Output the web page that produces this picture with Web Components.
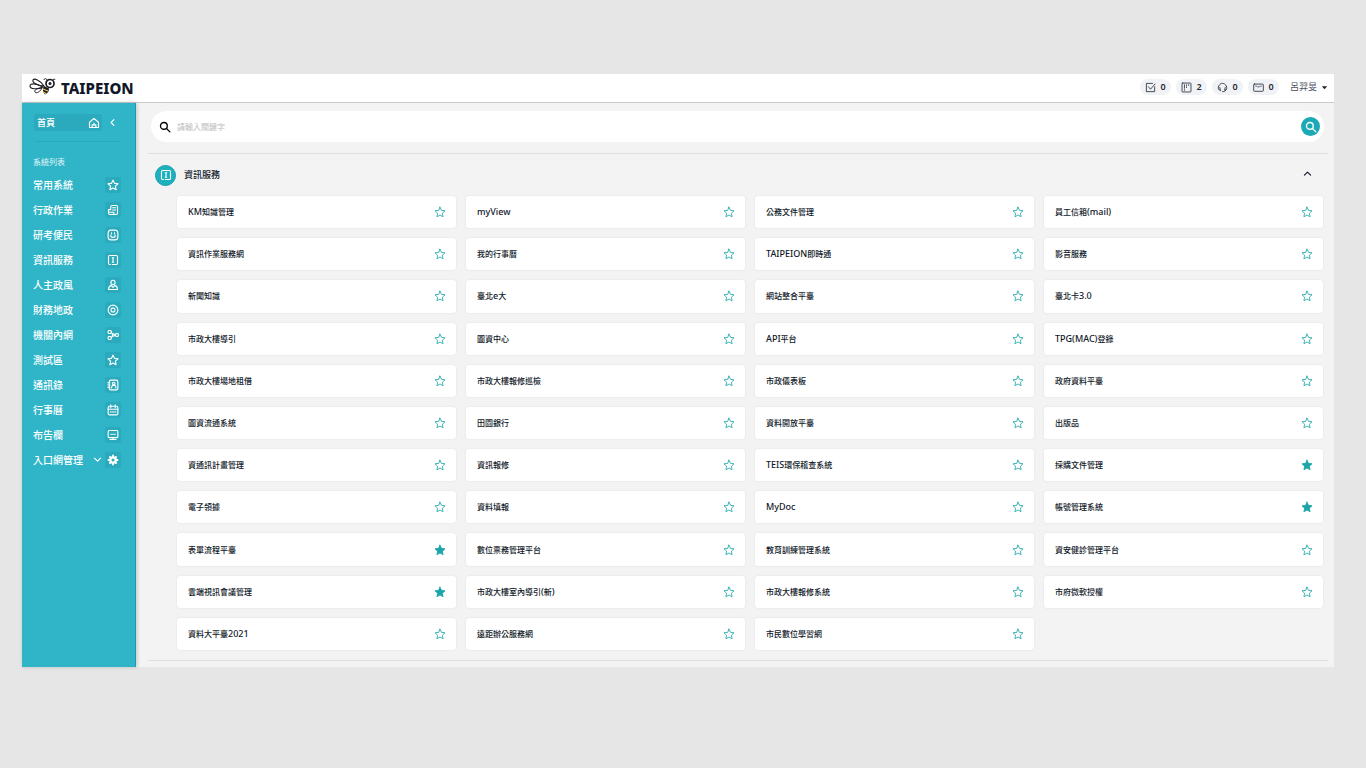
<!DOCTYPE html>
<html lang="zh-Hant">
<head>
<meta charset="utf-8">
<meta name="viewport" content="width=device-width, initial-scale=1">
<title>TAIPEION</title>
<style>
html, body { height: 100%; margin: 0; }
body {
  box-sizing: border-box; display: flex; flex-direction: column;
  padding: 74px 32px 101px 22px; background: #e6e6e6; color: #101828;
  font-family: "Noto Sans", "Noto Sans CJK TC", sans-serif;
}
</style>
</head>
<body>
<portal-app></portal-app>
<script>
const STAR = 'M8 1.5l2 4.3 4.700.600-3.500 3.200.900 4.700L8 12l-4.100 2.300.900-4.700L1.300 6.400 6 5.800z';
const ICONS = {
  star: `<path d="${STAR}"/>`,
  starFull: `<path d="${STAR}" fill="currentColor"/>`,
  home: '<path d="M2 7l6-5 6 5v7H2z"/><path d="M5.500 14v-3.500h5V14M8 8v2.500"/>',
  left: '<path d="M10.500 3L5.500 8l5 5"/>',
  down: '<path d="M2.500 5.500L8 11l5.500-5.500"/>',
  up: '<path d="M2.500 11L8 5.500 13.500 11"/>',
  doc: '<path d="M5 7V4a2 2 0 0 1 2-2h5.500A1.500 1.500 0 0 1 14 3.500V12a2 2 0 0 1-2 2H4a2 2 0 0 1-2-2v-1h7v1a2 2 0 0 0 2 2M7.500 5h4M7.500 8h4M2 11V7.500h3"/>',
  face: '<rect x="1.500" y="1.500" width="13" height="13" rx="4"/><path d="M5 8.500c0 3.500 6 3.500 6 0M6 5v1.500M10 5v1.500"/>',
  info: '<path d="M4.500 14h-1A1.500 1.500 0 0 1 2 12.500v-9A1.500 1.500 0 0 1 3.500 2h9A1.500 1.500 0 0 1 14 3.500v9a1.500 1.500 0 0 1-1.500 1.500H7M7 5h2M8 5v6M7 11h2"/>',
  person: '<circle cx="8" cy="4.500" r="2.800"/><path d="M5.500 8.500C3 9.500 2 11.500 2 14h12c0-2.500-1-4.500-3.500-5.500L8 11z"/>',
  coin: '<circle cx="8" cy="8" r="6.500"/><rect x="5.500" y="5.500" width="5" height="5" rx="1.500"/>',
  nodes: '<rect x="1.500" y="2" width="4" height="4" rx="1"/><rect x="1.500" y="10" width="4" height="4" rx="1"/><circle cx="8.500" cy="8" r="1.500"/><rect x="11.500" y="6" width="3.500" height="4" rx="1"/><path d="M5.500 4l2 3M5.500 12l2-3M10 8h1.500"/>',
  contact: '<rect x="3" y="1.500" width="11.500" height="13" rx="2"/><circle cx="9" cy="6" r="1.700"/><path d="M6 12c0-5 6-5 6 0M1 5h3M1 8h3M1 11h3"/>',
  calendar: '<rect x="1.500" y="3" width="13" height="11.500" rx="2"/><path d="M1.500 7h13M5 1v4M11 1v4M4.500 10.500h1M7.500 10.500h1M10.500 10.500h1"/>',
  board: '<rect x="1.500" y="2" width="13" height="9.500" rx="1.500"/><path d="M8 11.500V14M4 14h8M5 7h1M7.500 7h1M10 7h1"/>',
  gear: '<circle cx="8" cy="8" r="3.500" stroke-width="3"/><path d="M8 2v2M8 12v2M2 8h2M12 8h2M4 4l1 1M11 11l1 1M12 4l-1 1M4 12l1-1" stroke-width="2.600"/>',
  search: '<circle cx="6.500" cy="6.500" r="4.500"/><path d="M10 10l4.500 4.500"/>',
  check: '<path d="M14 7v7H2V2h9M5 7l3 3.500L14.500 3"/>',
  book: '<rect x="1.500" y="1.500" width="13" height="13" rx="1"/><path d="M5 4v5M5 11v1M8 4v1M8 7v1M11 4v1"/>',
  headset: '<path d="M5 12L3 11.500C0 9 3 2 8 2s8 7 5 9.500L11 12l1-4M5 12L4 8M13 11.500c-1 2-2 2.500-5 2.500"/>',
  mail: '<rect x="1" y="3" width="14" height="10.500" rx="1"/><path d="M4 6h1M7 7h2M11 6h1"/>',
  caret: '<path d="M2 5h12l-6 7z" fill="currentColor" stroke="none"/>'
};

function define(name, css, render) {
  customElements.define(name, class extends HTMLElement {
    connectedCallback() {
      if (this.shadowRoot) return;
      this.attachShadow({ mode: 'open' }).innerHTML =
        `<style>*{box-sizing:border-box}button{font:inherit;color:inherit;border:0;background:none;padding:0;cursor:pointer}a{color:inherit;text-decoration:none}${css}</style>${render(this)}`;
    }
  });
}

define('ui-icon',
  ':host{display:inline-flex;flex:none;width:12px;height:12px}svg{display:block;width:100%;height:100%}',
  el => `<svg viewBox="0 0 16 16" fill="none" stroke="currentColor" stroke-width="${el.getAttribute('weight') || 1.5}" stroke-linejoin="round" stroke-linecap="round" aria-hidden="true">${ICONS[el.getAttribute('name')]}</svg>`);

define('brand-logo', `
  :host{display:block}
  a{display:flex;align-items:center;gap:5px;font:800 15px/24px "Noto Sans",sans-serif;color:#111827}
  svg{width:27px;height:20px}
  span{padding-top:2px}`,
  () => `<a href="#"><svg viewBox="0 0 27 20" fill="none" stroke="#1c1c24" aria-hidden="true">
    <path d="M15 9C11 3 5 1 4 3s4 6 11 6z" stroke-width="1.100"/>
    <path d="M14 10C7 6 1 6 1 9s7 4 13 1z" stroke-width="1.100"/>
    <path d="M13 11c-5 0-8 2-7 4s5 0 7-4z" stroke-width="1"/>
    <path d="M15 9l5 2.500c0 3-1 4-4 6-2-2-3-5-1-8.500z" fill="#1c1c24" stroke="none"/>
    <path d="M14 12l5 2M14 15l3 1.500" stroke="#e8d24a" stroke-width="1.300"/>
    <circle cx="21" cy="6.500" r="4" fill="#fff" stroke-width="1.700"/>
    <circle cx="21" cy="6.500" r="1.500" fill="#1c1c24" stroke="none"/>
    <path d="M18 3c-1-2-3-1.500-3 0M24 3c1-1.500 2-1 2 0"/></svg><span>TAIPEION</span></a>`);

define('count-badge', `
  :host{display:block}
  button{display:flex;align-items:center;justify-content:center;gap:4px;width:31px;height:16px;border-radius:8px;background:#f1f2f5;color:#1f2937;font:600 9px/16px "Noto Sans",sans-serif}
  ui-icon{width:11px;height:11px}`,
  el => `<button aria-label="${el.getAttribute('label')}"><ui-icon name="${el.getAttribute('icon')}" weight="1.200"></ui-icon><slot></slot></button>`);

define('top-bar', `
  :host{display:flex;align-items:center;justify-content:space-between;height:29px;padding:0 6px 2px 7px;background:#fff;border-bottom:1px solid #c9cacb}
  div{display:flex;align-items:center;gap:5px}
  .user{display:flex;align-items:center;gap:4px;margin-left:6px;font-size:9px;line-height:16px;color:#4b5260}
  .user ui-icon{width:7px;height:7px;color:#222}`,
  () => `<brand-logo></brand-logo><div>
    <count-badge icon="check" label="待辦">0</count-badge><count-badge icon="book" label="公告">2</count-badge>
    <count-badge icon="headset" label="客服">0</count-badge><count-badge icon="mail" label="信件">0</count-badge>
    <button class="user">呂羿旻<ui-icon name="caret"></ui-icon></button></div>`);

define('nav-item', `
  :host{display:block}
  a{display:flex;align-items:center;height:25px;font-weight:500;font-size:10px;line-height:16px;white-space:nowrap}
  .label{flex:1}
  .box{display:flex;align-items:center;justify-content:center;width:16px;height:16px;border-radius:2px;background:#2aaabc}
  .more{width:9px;height:9px;margin-right:3px}`,
  el => `<a href="#"><span class="label"><slot></slot></span>${el.hasAttribute('more') ? '<ui-icon class="more" name="down" weight="2"></ui-icon>' : ''}<span class="box"><ui-icon name="${el.getAttribute('icon')}"></ui-icon></span></a>`);

const NAV = [['常用系統','star'],['行政作業','doc'],['研考便民','face'],['資訊服務','info'],['人主政風','person'],['財務地政','coin'],['機關內網','nodes'],['測試區','star'],['通訊錄','contact'],['行事曆','calendar'],['布告欄','board'],['入口網管理','gear']];

define('side-nav', `
  :host{display:block;flex:none;width:114px;padding:11px 14px 0 11px;background:#2fb5c7;color:#fff;border-right:1px solid #1d9bad;box-shadow:1px 0 4px #0003}
  .top{display:flex;align-items:center;gap:6px;padding-left:1px}
  .home{display:flex;align-items:center;justify-content:space-between;width:68px;height:17px;padding:0 2px 0 3px;border-radius:2px;background:#2aaabc;font-weight:500;font-size:9px}
  .top button{display:flex}
  .top button ui-icon{width:9px;height:9px}
  hr{height:1px;margin:10px 2px 12px;border:0;background:#2aa8ba}
  h2{margin:0 0 2px;font-weight:400;font-size:8px;line-height:16px;color:#e2f6f9}`,
  () => `<div class="top"><a class="home" href="#">首頁<ui-icon name="home"></ui-icon></a><button aria-label="收合"><ui-icon name="left" weight="2"></ui-icon></button></div>
    <hr><h2>系統列表</h2><nav>${NAV.map(([t, i]) => `<nav-item icon="${i}"${i === 'gear' ? ' more' : ''}>${t}</nav-item>`).join('')}</nav>`);

define('search-bar', `
  :host{display:block}
  form{display:flex;align-items:center;gap:6px;height:31px;padding:0 4px 0 8px;border-radius:16px;background:#fff}
  input{flex:1;min-width:0;border:0;outline:0;padding:0;background:none;font:400 8px/16px "Noto Sans","Noto Sans CJK TC",sans-serif}
  input::placeholder{color:#bdbdbd}
  button{display:flex;align-items:center;justify-content:center;width:19px;height:19px;border-radius:50%;background:#1ba9b5;color:#fff}
  label{display:flex;color:#000}`,
  () => `<form onsubmit="return false"><label for="q" aria-label="搜尋"><ui-icon name="search" weight="1.800"></ui-icon></label><input id="q" type="search" placeholder="請輸入關鍵字"><button aria-label="搜尋"><ui-icon name="search" weight="1.800"></ui-icon></button></form>`);

define('system-card', `
  :host{display:flex;align-items:center;padding:0 10px 0 11px;background:#fff;border-radius:3px;box-shadow:0 0 2px #00000018}
  a{flex:1;font-weight:500;font-size:8px;line-height:16px;white-space:nowrap}
  .latin{font-size:9px}
  button{display:flex;color:#1ba5a8}`,
  el => {
    const name = el.getAttribute('name').replace(/[\x20-\x7e]+/g, '<span class="latin">$&</span>');
    const on = el.hasAttribute('favourite');
    return `<a href="#">${name}</a><button aria-label="常用" aria-pressed="${on}"><ui-icon name="${on ? 'starFull' : 'star'}" weight="1.100"></ui-icon></button>`;
  });

const SYSTEMS = `KM知識管理|myView|公務文件管理|員工信箱(mail)
資訊作業服務網|我的行事曆|TAIPEION即時通|影音服務
新聞知識|臺北e大|網站整合平臺|臺北卡3.0
市政大樓導引|圖資中心|API平台|TPG(MAC)登錄
市政大樓場地租借|市政大樓報修巡檢|市政儀表板|政府資料平臺
圖資流通系統|田園銀行|資料開放平臺|出版品
資通訊計畫管理|資訊報修|TEIS環保稽查系統|*採購文件管理
電子領據|資料填報|MyDoc|*帳號管理系統
*表單流程平臺|數位票務管理平台|教育訓練管理系統|資安健診管理平台
*雲端視訊會議管理|市政大樓室內導引(新)|市政大樓報修系統|市府微軟授權
資料大平臺2021|遠距辦公服務網|市民數位學習網`.split(/[|\n]/);

define('system-section', `
  :host{display:flex;flex-direction:column;flex:1}
  header{display:flex;align-items:center;gap:8px;height:42px;padding:0 12px 0 4px}
  .mark{display:flex;align-items:center;justify-content:center;width:21px;height:21px;border-radius:50%;background:#1fb0bf;border:1px solid #159fab;color:#fff}
  h1{flex:1;margin:0;font-weight:500;font-size:9px;line-height:16px}
  header button{display:flex}
  header button ui-icon{width:9px;height:9px;margin-bottom:4px}
  .grid{flex:1;display:grid;grid-template-columns:repeat(4,minmax(0,1fr));grid-auto-rows:minmax(32px,1fr);gap:10px;padding:0 1px 0 26px}`,
  () => `<header><span class="mark"><ui-icon name="info"></ui-icon></span><h1>資訊服務</h1><button aria-label="收合"><ui-icon name="up" weight="2"></ui-icon></button></header>
    <div class="grid">${SYSTEMS.map(s => `<system-card name="${s.replace('*', '')}"${s[0] === '*' ? ' favourite' : ''}></system-card>`).join('')}</div>`);

define('portal-app', `
  :host{display:flex;flex-direction:column;flex:1;background:#f3f3f3}
  .body{flex:1;display:flex}
  main{flex:1;min-width:0;display:flex;flex-direction:column;padding:8px 10px 6px 15px}
  hr{width:calc(100% + 7px);height:1px;margin:11px -4px 0 -3px;border:0;background:#dedede}
  hr.end{margin-top:10px}`,
  () => `<top-bar></top-bar><div class="body"><side-nav></side-nav><main><search-bar></search-bar><hr><system-section></system-section><hr class="end"></main></div>`);
</script>
</body>
</html>
